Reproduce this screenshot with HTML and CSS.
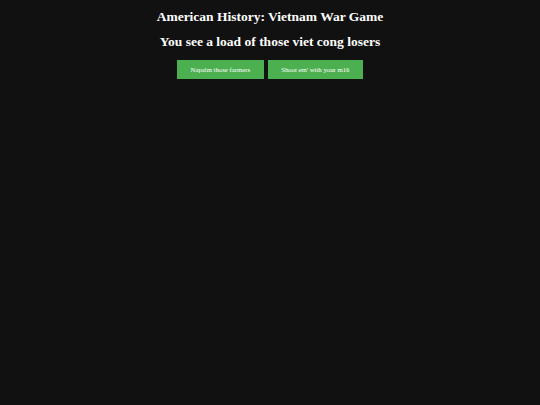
FILE: index.html
```html
<!DOCTYPE html>
<html>
<head>
<meta charset="utf-8">
<link rel="stylesheet" href="styles.css">
</head>
<body>
<div class="game">
  <h1 class="title">American History: Vietnam War Game</h1>
  <h2 class="prompt">You see a load of those viet cong losers</h2>
  <div class="choices">
    <button class="choice">Napalm those farmers</button>
    <button class="choice">Shoot em' with your m16</button>
  </div>
</div>
</body>
</html>
```
FILE: styles.css
```css
html, body {
  margin: 0;
  padding: 0;
  background: #111111;
  height: 100%;
}
body {
  font-family: "Liberation Serif", "Times New Roman", serif;
  color: #ffffff;
}
.game {
  display: flex;
  flex-direction: column;
  align-items: center;
  padding-top: 8px;
}
.title {
  margin: 0;
  font-size: 13.5px;
  line-height: 17px;
  font-weight: bold;
}
.prompt {
  margin: 8px 0 0 0;
  font-size: 13.5px;
  line-height: 17px;
  font-weight: bold;
}
.choices {
  display: flex;
  gap: 4px;
  margin-top: 10px;
}
.choice {
  background: #4caf50;
  color: #ffffff;
  border: none;
  font-family: "Liberation Serif", "Times New Roman", serif;
  font-size: 6.75px;
  height: 19px;
  padding: 0 13.5px;
  margin: 0;
}
```
